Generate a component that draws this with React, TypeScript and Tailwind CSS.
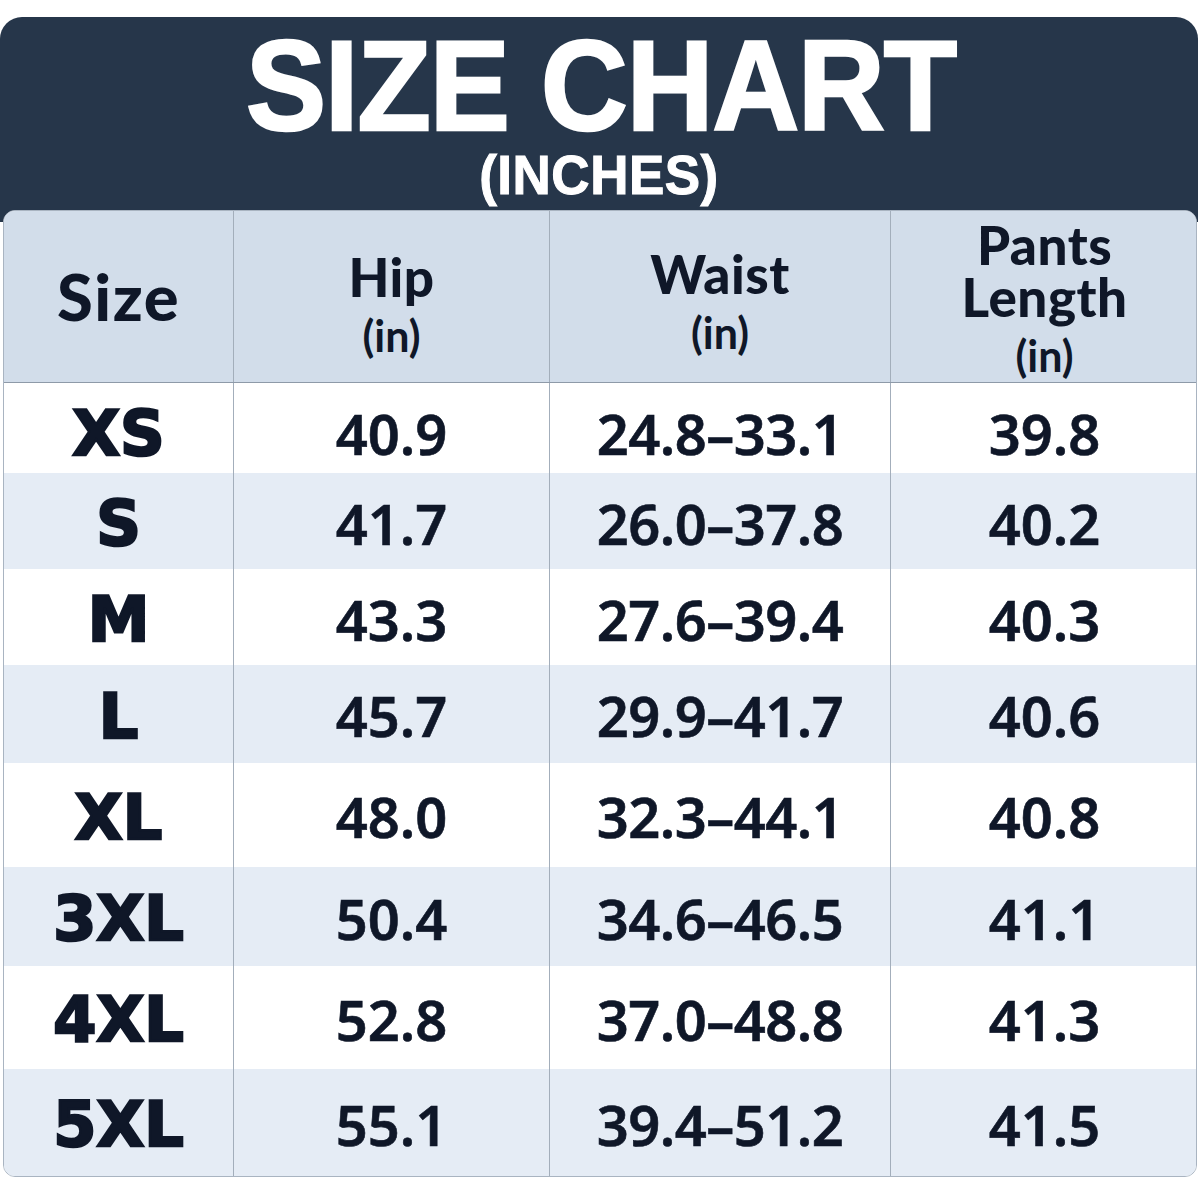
import React from 'react';

// ─── Data ──────────────────────────────────────────────────────────────────────

interface SizeRow {
  size: string;
  hip: string;
  waist: string;
  length: string;
  h: number; // row height in px
}

const ROWS: SizeRow[] = [
  { size: 'XS', hip: '40.9', waist: '24.8–33.1', length: '39.8', h: 90 },
  { size: 'S', hip: '41.7', waist: '26.0–37.8', length: '40.2', h: 96 },
  { size: 'M', hip: '43.3', waist: '27.6–39.4', length: '40.3', h: 96 },
  { size: 'L', hip: '45.7', waist: '29.9–41.7', length: '40.6', h: 98 },
  { size: 'XL', hip: '48.0', waist: '32.3–44.1', length: '40.8', h: 104 },
  { size: '3XL', hip: '50.4', waist: '34.6–46.5', length: '41.1', h: 99 },
  { size: '4XL', hip: '52.8', waist: '37.0–48.8', length: '41.3', h: 103 },
  { size: '5XL', hip: '55.1', waist: '39.4–51.2', length: '41.5', h: 107 },
];

const COLS = 'grid grid-cols-[229px_316px_341px_308px]';
const cell = 'flex items-center justify-center';
const divider = 'border-l-[1.5px] border-[#a3aebb]';
const num = "font-['Noto_Sans',sans-serif] font-semibold text-[56px] pt-[2px] [-webkit-text-stroke:0.6px_#0f1728]";

// ─── Header cell ───────────────────────────────────────────────────────────────

function HeadCell({ lines, className = '' }: { lines: string[]; className?: string }) {
  return (
    <div className={`${cell} flex-col ${className}`}>
      {lines.map((l) => (
        <div key={l} className="text-[53px] leading-[52px] font-black tracking-[0.5px]">
          {l}
        </div>
      ))}
      <div className="text-[43px] leading-[42px] font-bold mt-[12px]">(in)</div>
    </div>
  );
}

// ─── App ───────────────────────────────────────────────────────────────────────

export default function App() {
  return (
    <div className="w-[1200px] h-[1200px] bg-white pt-[17px] text-[#0f1728]">
      {/* Title band */}
      <header className="w-[1198px] h-[205px] bg-[#26364a] rounded-t-[22px] flex flex-col items-center pt-[14px] text-white font-['Liberation_Sans',Arial,sans-serif] font-bold">
        <h1 className="text-[120px] leading-[108px] tracking-[-1px] ml-[4px] scale-y-[1.07] [-webkit-text-stroke:2.5px_white]">
          SIZE CHART
        </h1>
        <p className="text-[53px] leading-[56px] mt-[8px] tracking-[0.5px] scale-y-[1.06] [-webkit-text-stroke:1px_white]">
          (INCHES)
        </p>
      </header>

      {/* Table */}
      <div className="relative -mt-[12px] ml-[3px] w-[1194px] rounded-[12px] border-[1.5px] border-[#a9b4c1] overflow-hidden bg-white">
        <div
          className={`${COLS} h-[172px] bg-[#d2ddea] border-b-[1.5px] border-[#8e9aa8] font-['Lato','Noto_Sans',sans-serif]`}
        >
          <div className={cell}>
            <span className="text-[65px] font-black tracking-[1.5px]">Size</span>
          </div>
          <HeadCell lines={['Hip']} className={`${divider} pt-[14px]`} />
          <HeadCell lines={['Waist']} className={`${divider} pt-[8px]`} />
          <HeadCell lines={['Pants', 'Length']} className={`${divider} pt-[2px]`} />
        </div>

        {ROWS.map((r, i) => (
          <div
            key={r.size}
            className={`${COLS} ${i % 2 === 1 ? 'bg-[#e5ecf5]' : 'bg-white'}`}
            style={{ height: r.h }}
          >
            <div className={`${cell} font-['DejaVu_Sans',sans-serif] font-bold text-[62px] tracking-[0px] pt-[4px] [-webkit-text-stroke:2.5px_#0f1728]`}>
              {r.size}
            </div>
            <div className={`${cell} ${divider} ${num}`}>{r.hip}</div>
            <div className={`${cell} ${divider} ${num} tracking-[-0.5px]`}>{r.waist}</div>
            <div className={`${cell} ${divider} ${num}`}>{r.length}</div>
          </div>
        ))}
      </div>
    </div>
  );
}
